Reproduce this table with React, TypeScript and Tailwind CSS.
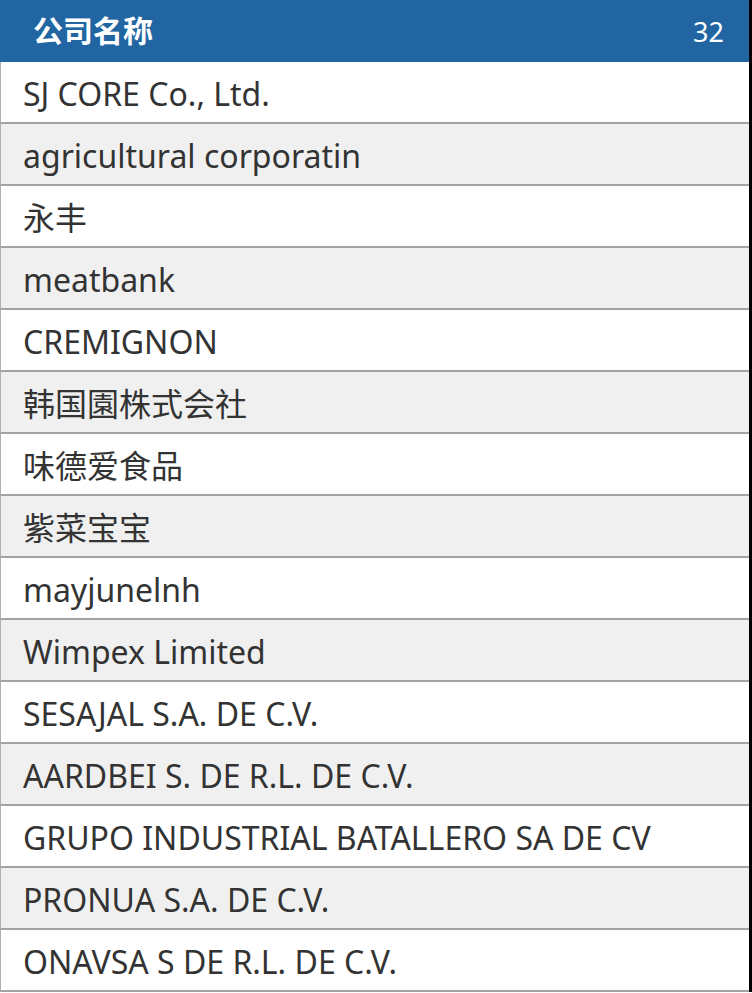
import React from "react";

const rows = [
  "SJ CORE Co., Ltd.",
  "agricultural corporatin",
  "永丰",
  "meatbank",
  "CREMIGNON",
  "韩国園株式会社",
  "味德爱食品",
  "紫菜宝宝",
  "mayjunelnh",
  "Wimpex Limited",
  "SESAJAL S.A. DE C.V.",
  "AARDBEI S. DE R.L. DE C.V.",
  "GRUPO INDUSTRIAL BATALLERO SA DE CV",
  "PRONUA S.A. DE C.V.",
  "ONAVSA S DE R.L. DE C.V.",
];

export default function App() {
  return (
    <div
      className="w-[752px] h-[993px] bg-white overflow-hidden"
      style={{ fontFamily: '"Noto Sans", "Noto Sans CJK SC", sans-serif' }}
    >
      <div className="w-[752px] border-r-[3px] border-black">
        <div className="h-[62px] bg-[#2166a2] flex items-center justify-between pl-[33px] pr-[25px] text-white">
          <span className="text-[30px] font-bold leading-none">公司名称</span>
          <span className="text-[27px] leading-none">32</span>
        </div>
        {rows.map((r, i) => (
          <div
            key={i}
            className={`h-[62px] box-border border-l border-b-2 border-l-[#b0b0b0] border-b-[#a3a3a3] flex items-center pl-[22px] pt-[4px] text-[32px] leading-none text-[#333333] ${
              i % 2 === 1 ? "bg-[#f0f0f0]" : "bg-white"
            }`}
          >
            {r}
          </div>
        ))}
      </div>
    </div>
  );
}
